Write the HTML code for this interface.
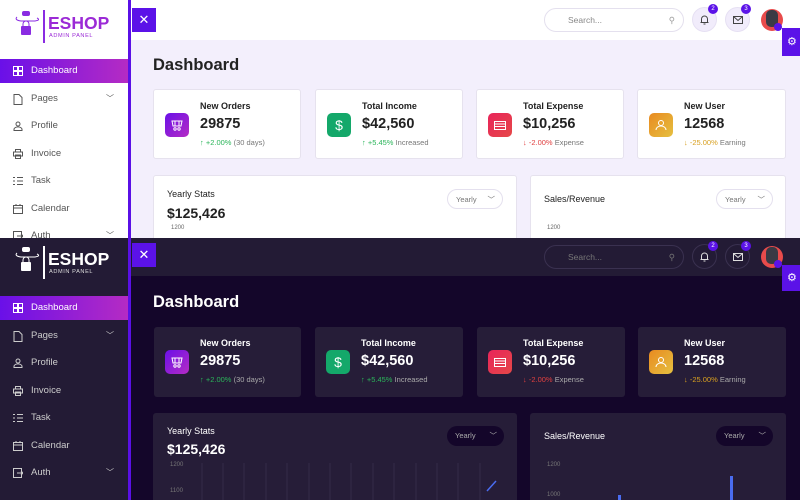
<!DOCTYPE html><html><head><meta charset="utf-8"><style>
*{margin:0;padding:0;box-sizing:border-box}
body{width:800px;height:500px;overflow:hidden;font-family:"Liberation Sans",sans-serif;position:relative;background:#fff}
.p{position:absolute;left:0;width:800px;overflow:hidden}
.a{position:absolute}
.side{left:0;top:0;width:128px;height:100%}
.bar{left:128px;top:0;width:3px;height:100%;background:#5a10e6}
.hdr{left:131px;top:0;width:669px;height:40px}
.x{left:132px;top:8px;width:24px;height:24px;background:#5b12e8;color:#fff;font-size:13px;text-align:center;line-height:23px}
.menu{left:0;width:128px;height:24px;font-size:9.5px;line-height:24px;padding-left:31px}
.menu svg{position:absolute;left:13px;top:7px}
.act{background:linear-gradient(90deg,#6a10e8,#b52bc4);color:#fff}
.chev{position:absolute;right:14px;top:0;font-size:8px}
.card{height:70px;border-radius:3px}
.ic{width:24px;height:24px;border-radius:5px;left:11px;top:23px}
.ic svg{position:absolute;left:6px;top:6px}
.ct{left:46px;top:11px;font-size:9px;font-weight:bold}
.cv{left:46px;top:26px;font-size:14.5px;font-weight:bold}
.cs{left:46px;top:48px;font-size:7.5px}
.search{left:544px;top:8px;width:140px;height:24px;border-radius:12px;font-size:8.5px;line-height:22px;padding-left:23px}
.circ{width:25px;height:25px;border-radius:50%;top:7px}
.badge{width:10px;height:10px;border-radius:50%;background:#5b12e8;color:#fff;font-size:6px;text-align:center;line-height:10px;top:4px}
.sel{height:20px;border-radius:10px;font-size:7.5px;line-height:20px;padding-left:8px}
.lab{font-size:6px}
.logo{left:48px;font-size:17.5px;font-weight:bold;letter-spacing:0}
.sub{left:49px;font-size:5.6px;letter-spacing:.6px}
</style></head><body>

<!-- LIGHT -->
<div class="p" style="top:0;height:238px;background:#f3effc;color:#222">
 <div class="a side" style="background:#fff"></div>
 <div class="a bar"></div>
 <div class="a hdr" style="background:#fff"></div>
 <div class="a x">✕</div>
 <svg class="a" style="left:13px;top:9px" width="30" height="32" viewBox="0 0 30 32"><rect x="9" y="2" width="8" height="5" rx="2" fill="#8a2be2"/><path d="M4 8 Q1 11 8 12 L22 12 Q28 11 24 9" stroke="#8a2be2" stroke-width="1" fill="none"/><rect x="8" y="17" width="10" height="9" rx="1" fill="#8a2be2"/><path d="M10 17 v-2 a3 3 0 0 1 6 0 v2" stroke="#8a2be2" fill="none"/></svg>
 <div class="a" style="left:43px;top:10px;width:1.5px;height:33px;background:#8a2be2"></div>
 <div class="a logo" style="top:13px;color:#9b2ad6">ESHOP</div>
 <div class="a sub" style="top:33px;color:#9b2ad6">ADMIN PANEL</div>
 <div class="a menu act" style="top:59px"><svg width="10" height="10"><rect x="0.5" y="0.5" width="4" height="4" fill="none" stroke="#fff"/><rect x="5.5" y="0.5" width="4" height="4" fill="none" stroke="#fff"/><rect x="0.5" y="5.5" width="4" height="4" fill="none" stroke="#fff"/><rect x="5.5" y="5.5" width="4" height="4" fill="none" stroke="#fff"/></svg>Dashboard</div>
 <div class="a menu" style="top:87px;color:#555">Pages<span class="chev">﹀</span><svg width="10" height="11"><path d="M1 .5h5l3 3v7H1z" fill="none" stroke="#555"/></svg></div>
 <div class="a menu" style="top:114px;color:#555">Profile<svg width="10" height="10"><circle cx="5" cy="3" r="2" fill="none" stroke="#555"/><path d="M1 9.5h8v-1a3 2 0 0 0-8 0z" fill="none" stroke="#555"/></svg></div>
 <div class="a menu" style="top:142px;color:#555">Invoice<svg width="10" height="10"><rect x=".5" y="3" width="9" height="4" fill="none" stroke="#555"/><rect x="2.5" y=".5" width="5" height="2.5" fill="none" stroke="#555"/><rect x="2.5" y="6" width="5" height="3.5" fill="none" stroke="#555"/></svg></div>
 <div class="a menu" style="top:169px;color:#555">Task<svg width="10" height="10"><path d="M0 1.5h2M4 1.5h6M0 5h2M4 5h6M0 8.5h2M4 8.5h6" stroke="#555"/></svg></div>
 <div class="a menu" style="top:197px;color:#555">Calendar<svg width="10" height="10"><rect x=".5" y="1.5" width="9" height="8" fill="none" stroke="#555"/><path d="M.5 4h9M3 0v2M7 0v2" stroke="#555"/></svg></div>
 <div class="a menu" style="top:224px;color:#555">Auth<span class="chev">﹀</span><svg width="10" height="10"><rect x=".5" y=".5" width="8" height="9" fill="none" stroke="#555"/><path d="M4 5h6M8 3l2 2-2 2" stroke="#555" fill="none"/></svg></div>

 <div class="a search" style="background:#fff;border:1px solid #e4e0ee;color:#888">Search...<span style="position:absolute;right:8px;top:0;color:#999">⚲</span></div>
 <div class="a circ" style="left:692px;background:#f1ecfb;border:1px solid #e6e0f3"></div><svg class="a" style="left:700px;top:15px" width="9" height="10"><path d="M1.5 7.5V4a3 3 0 0 1 6 0v3.5zM.5 7.5h8M3.5 9h2" stroke="#444" fill="none"/></svg>
 <div class="a circ" style="left:725px;background:#f1ecfb;border:1px solid #e6e0f3"></div><svg class="a" style="left:733px;top:16px" width="10" height="8"><rect x=".5" y=".5" width="9" height="7" fill="none" stroke="#444"/><path d="M.5 .5l4.5 4 4.5-4" stroke="#444" fill="none"/></svg>
 <div class="a badge" style="left:708px">2</div><div class="a badge" style="left:741px">3</div>
 <div class="a" style="left:761px;top:9px;width:22px;height:22px;border-radius:50%;background:#e84b4b"></div><div class="a" style="left:766px;top:10px;width:12px;height:17px;border-radius:5px;background:#3a3a44"></div><div class="a" style="left:774px;top:23px;width:8px;height:8px;border-radius:50%;background:#5b12e8"></div>
 <div class="a" style="left:782px;top:28px;width:18px;height:28px;background:#5b12e8;color:#fff;font-size:11px;line-height:28px;padding-left:5px">⚙</div>

 <div class="a" style="left:153px;top:56px;font-size:16.5px;font-weight:bold;color:#222">Dashboard</div>

 <div class="a card" style="left:153px;top:89px;width:148px;background:#fff;border:1px solid #e6e2ee"><div class="a ic" style="background:linear-gradient(135deg,#6a10e8,#b52bc4)"><svg width="12" height="12"><path d="M1 2h10l-1 5H2z M4 2v5M8 2v5" stroke="#fff" fill="none"/><circle cx="4" cy="10" r="1.2" stroke="#fff" fill="none"/><circle cx="8" cy="10" r="1.2" stroke="#fff" fill="none"/></svg></div><div class="a ct">New Orders</div><div class="a cv">29875</div><div class="a cs" style="color:#777"><span style="color:#2bb55a">↑ +2.00%</span> (30 days)</div></div>
 <div class="a card" style="left:315px;top:89px;width:148px;background:#fff;border:1px solid #e6e2ee"><div class="a ic" style="background:#14a86a;color:#fff;font-size:14px;text-align:center;line-height:24px">$</div><div class="a ct">Total Income</div><div class="a cv">$42,560</div><div class="a cs" style="color:#777"><span style="color:#2bb55a">↑ +5.45%</span> Increased</div></div>
 <div class="a card" style="left:476px;top:89px;width:148px;background:#fff;border:1px solid #e6e2ee"><div class="a ic" style="background:linear-gradient(135deg,#e8245a,#e64848)"><svg width="12" height="12"><rect x=".5" y="2.5" width="11" height="8" fill="none" stroke="#fff"/><path d="M.5 5h11M.5 7.5h11" stroke="#fff"/></svg></div><div class="a ct">Total Expense</div><div class="a cv">$10,256</div><div class="a cs" style="color:#777"><span style="color:#e04040">↓ -2.00%</span> Expense</div></div>
 <div class="a card" style="left:637px;top:89px;width:149px;background:#fff;border:1px solid #e6e2ee"><div class="a ic" style="background:linear-gradient(135deg,#e88a20,#e6c040)"><svg width="12" height="12"><circle cx="6" cy="4" r="2.5" stroke="#fff" fill="none"/><path d="M1 11a5 4 0 0 1 10 0" stroke="#fff" fill="none"/></svg></div><div class="a ct">New User</div><div class="a cv">12568</div><div class="a cs" style="color:#777"><span style="color:#d8a020">↓ -25.00%</span> Earning</div></div>

 <div class="a" style="left:153px;top:175px;width:364px;height:80px;background:#fff;border:1px solid #e6e2ee;border-radius:3px"></div>
 <div class="a" style="left:167px;top:189px;font-size:9px;color:#222">Yearly Stats</div>
 <div class="a" style="left:167px;top:205px;font-size:14px;font-weight:bold">$125,426</div>
 <div class="a lab" style="left:171px;top:225px;color:#666">1200</div>
 <div class="a sel" style="left:447px;top:189px;width:56px;background:#fff;border:1px solid #e4e0ee;color:#777">Yearly<span style="position:absolute;right:7px">﹀</span></div>
 <div class="a" style="left:530px;top:175px;width:256px;height:80px;background:#fff;border:1px solid #e6e2ee;border-radius:3px"></div>
 <div class="a" style="left:544px;top:194px;font-size:9px">Sales/Revenue</div>
 <div class="a sel" style="left:716px;top:189px;width:57px;background:#fff;border:1px solid #e4e0ee;color:#777">Yearly<span style="position:absolute;right:7px">﹀</span></div>
 <div class="a lab" style="left:547px;top:225px;color:#666">1200</div>
</div>

<!-- DARK -->
<div class="p" style="top:238px;height:262px;background:#14062a;color:#fff">
 <div class="a side" style="background:#231b35"></div>
 <div class="a bar"></div>
 <div class="a hdr" style="background:#231b35;height:38px"></div>
 <div class="a x" style="top:5px">✕</div>
 <svg class="a" style="left:13px;top:7px" width="30" height="32" viewBox="0 0 30 32"><rect x="9" y="2" width="8" height="5" rx="2" fill="#fff"/><path d="M4 8 Q1 11 8 12 L22 12 Q28 11 24 9" stroke="#fff" stroke-width="1" fill="none"/><rect x="8" y="17" width="10" height="9" rx="1" fill="#fff"/><path d="M10 17 v-2 a3 3 0 0 1 6 0 v2" stroke="#fff" fill="none"/></svg>
 <div class="a" style="left:43px;top:8px;width:1.5px;height:33px;background:#fff"></div>
 <div class="a logo" style="top:11px;color:#fff">ESHOP</div>
 <div class="a sub" style="top:31px;color:#ddd">ADMIN PANEL</div>
 <div class="a menu act" style="top:58px"><svg width="10" height="10"><rect x="0.5" y="0.5" width="4" height="4" fill="none" stroke="#fff"/><rect x="5.5" y="0.5" width="4" height="4" fill="none" stroke="#fff"/><rect x="0.5" y="5.5" width="4" height="4" fill="none" stroke="#fff"/><rect x="5.5" y="5.5" width="4" height="4" fill="none" stroke="#fff"/></svg>Dashboard</div>
 <div class="a menu" style="top:86px;color:#ccc">Pages<span class="chev">﹀</span><svg width="10" height="11"><path d="M1 .5h5l3 3v7H1z" fill="none" stroke="#ccc"/></svg></div>
 <div class="a menu" style="top:113px;color:#ccc">Profile<svg width="10" height="10"><circle cx="5" cy="3" r="2" fill="none" stroke="#ccc"/><path d="M1 9.5h8v-1a3 2 0 0 0-8 0z" fill="none" stroke="#ccc"/></svg></div>
 <div class="a menu" style="top:141px;color:#ccc">Invoice<svg width="10" height="10"><rect x=".5" y="3" width="9" height="4" fill="none" stroke="#ccc"/><rect x="2.5" y=".5" width="5" height="2.5" fill="none" stroke="#ccc"/><rect x="2.5" y="6" width="5" height="3.5" fill="none" stroke="#ccc"/></svg></div>
 <div class="a menu" style="top:168px;color:#ccc">Task<svg width="10" height="10"><path d="M0 1.5h2M4 1.5h6M0 5h2M4 5h6M0 8.5h2M4 8.5h6" stroke="#ccc"/></svg></div>
 <div class="a menu" style="top:196px;color:#ccc">Calendar<svg width="10" height="10"><rect x=".5" y="1.5" width="9" height="8" fill="none" stroke="#ccc"/><path d="M.5 4h9M3 0v2M7 0v2" stroke="#ccc"/></svg></div>
 <div class="a menu" style="top:223px;color:#ccc">Auth<span class="chev">﹀</span><svg width="10" height="10"><rect x=".5" y=".5" width="8" height="9" fill="none" stroke="#ccc"/><path d="M4 5h6M8 3l2 2-2 2" stroke="#ccc" fill="none"/></svg></div>

 <div class="a search" style="top:7px;background:#231b35;border:1px solid #3a3150;color:#777">Search...<span style="position:absolute;right:8px;top:0;color:#777">⚲</span></div>
 <div class="a circ" style="left:692px;top:6px;background:#231b35;border:1px solid #3a3150"></div><svg class="a" style="left:700px;top:14px" width="9" height="10"><path d="M1.5 7.5V4a3 3 0 0 1 6 0v3.5zM.5 7.5h8M3.5 9h2" stroke="#ddd" fill="none"/></svg>
 <div class="a circ" style="left:725px;top:6px;background:#231b35;border:1px solid #3a3150"></div><svg class="a" style="left:733px;top:15px" width="10" height="8"><rect x=".5" y=".5" width="9" height="7" fill="none" stroke="#ddd"/><path d="M.5 .5l4.5 4 4.5-4" stroke="#ddd" fill="none"/></svg>
 <div class="a badge" style="left:708px;top:3px">2</div><div class="a badge" style="left:741px;top:3px">3</div>
 <div class="a" style="left:761px;top:8px;width:22px;height:22px;border-radius:50%;background:#e84b4b"></div><div class="a" style="left:766px;top:9px;width:12px;height:17px;border-radius:5px;background:#3a3a44"></div><div class="a" style="left:774px;top:22px;width:8px;height:8px;border-radius:50%;background:#5b12e8"></div>
 <div class="a" style="left:782px;top:27px;width:18px;height:26px;background:#5b12e8;color:#fff;font-size:11px;line-height:26px;padding-left:5px">⚙</div>

 <div class="a" style="left:153px;top:55px;font-size:16.5px;font-weight:bold">Dashboard</div>

 <div class="a card" style="left:154px;top:89px;width:147px;background:#261d38"><div class="a ic" style="background:linear-gradient(135deg,#6a10e8,#b52bc4)"><svg width="12" height="12"><path d="M1 2h10l-1 5H2z M4 2v5M8 2v5" stroke="#fff" fill="none"/><circle cx="4" cy="10" r="1.2" stroke="#fff" fill="none"/><circle cx="8" cy="10" r="1.2" stroke="#fff" fill="none"/></svg></div><div class="a ct">New Orders</div><div class="a cv">29875</div><div class="a cs" style="color:#aaa"><span style="color:#2bb55a">↑ +2.00%</span> (30 days)</div></div>
 <div class="a card" style="left:315px;top:89px;width:148px;background:#261d38"><div class="a ic" style="background:#14a86a;color:#fff;font-size:14px;text-align:center;line-height:24px">$</div><div class="a ct">Total Income</div><div class="a cv">$42,560</div><div class="a cs" style="color:#aaa"><span style="color:#2bb55a">↑ +5.45%</span> Increased</div></div>
 <div class="a card" style="left:477px;top:89px;width:148px;background:#261d38"><div class="a ic" style="background:linear-gradient(135deg,#e8245a,#e64848)"><svg width="12" height="12"><rect x=".5" y="2.5" width="11" height="8" fill="none" stroke="#fff"/><path d="M.5 5h11M.5 7.5h11" stroke="#fff"/></svg></div><div class="a ct">Total Expense</div><div class="a cv">$10,256</div><div class="a cs" style="color:#aaa"><span style="color:#e04040">↓ -2.00%</span> Expense</div></div>
 <div class="a card" style="left:638px;top:89px;width:148px;background:#261d38"><div class="a ic" style="background:linear-gradient(135deg,#e88a20,#e6c040)"><svg width="12" height="12"><circle cx="6" cy="4" r="2.5" stroke="#fff" fill="none"/><path d="M1 11a5 4 0 0 1 10 0" stroke="#fff" fill="none"/></svg></div><div class="a ct">New User</div><div class="a cv">12568</div><div class="a cs" style="color:#aaa"><span style="color:#d8a020">↓ -25.00%</span> Earning</div></div>

 <div class="a" style="left:153px;top:175px;width:364px;height:100px;background:#261d38;border-radius:3px"></div>
 <div class="a" style="left:167px;top:188px;font-size:9px">Yearly Stats</div>
 <div class="a" style="left:167px;top:203px;font-size:14px;font-weight:bold">$125,426</div>
 <div class="a lab" style="left:170px;top:224px;color:#777">1200</div>
 <div class="a lab" style="left:170px;top:250px;color:#777">1100</div>
 <div class="a sel" style="left:447px;top:188px;width:57px;background:#14062a;color:#aaa">Yearly<span style="position:absolute;right:7px">﹀</span></div>
 <svg class="a" style="left:190px;top:225px" width="320" height="40"><g stroke="#342a48"><path d="M12 0v40M33 0v40M54 0v40M76 0v40M97 0v40M119 0v40M140 0v40M161 0v40M183 0v40M204 0v40M226 0v40M247 0v40M268 0v40M290 0v40"/></g><path d="M297 28L306 18" stroke="#4a6cf0" stroke-width="1.5"/></svg>
 <div class="a" style="left:530px;top:175px;width:256px;height:100px;background:#261d38;border-radius:3px"></div>
 <div class="a" style="left:544px;top:193px;font-size:9px">Sales/Revenue</div>
 <div class="a sel" style="left:716px;top:188px;width:57px;background:#14062a;color:#aaa">Yearly<span style="position:absolute;right:7px">﹀</span></div>
 <div class="a lab" style="left:547px;top:224px;color:#777">1200</div>
 <div class="a lab" style="left:547px;top:254px;color:#777">1000</div>
 <div class="a" style="left:618px;top:257px;width:3px;height:10px;background:#4a6cf0"></div>
 <div class="a" style="left:730px;top:238px;width:3px;height:30px;background:#4a6cf0"></div>
</div>
</body></html>
